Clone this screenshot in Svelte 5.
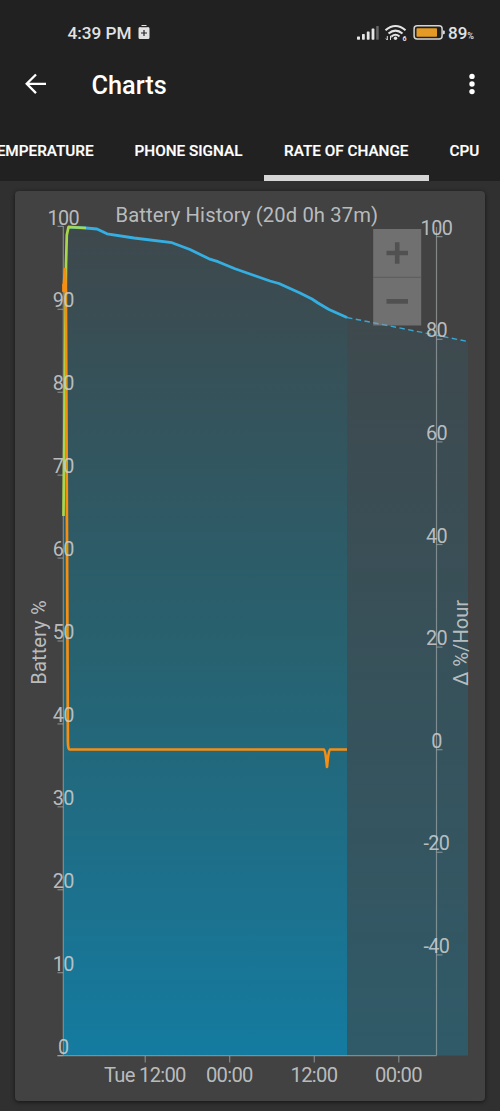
<script>
  const left = Array.from({ length: 11 }, (_, i) => ({ v: 100 - i * 10, y: 226.4 + i * 82.92 }));
  const right = Array.from({ length: 8 }, (_, i) => ({ v: 100 - i * 20, y: 236.7 + i * 102.6 }));
  const times = [
    { t: 'Tue 12:00', x: 145.2, w: 82.5 },
    { t: '00:00', x: 229.7, w: 47.5 },
    { t: '12:00', x: 314.3, w: 47.5 },
    { t: '00:00', x: 398.8, w: 47.5 }
  ];
  const history = 'L86 228 L97 229 L107 233.8 L134 238 L172 242.7 L190 249.5 L209 258.8 L218 261.7 L235 268.8 L255 275.8 L270 281 L279 283.5 L300 293 L312 299 L318 303 L329 309.5 L347 317.5';
</script>

<div class="screen">
  <header>
    <div class="status">
      <span class="clock">4:39 PM</span>
      <svg class="saver" width="12" height="15" viewBox="0 0 12 15">
        <path d="M3.500 0h5v2H10q1.500 0 1.500 1.500v9Q11.500 14 10 14H2Q.5 14 .5 12.500v-9Q.5 2 2 2h1.500z" fill="#e2e2e2" />
        <path d="M2.500 1.700h7M6 5v6M3 8h6" stroke="#252525" stroke-width="1.200" />
      </svg>
      <svg class="indicators" width="90" height="22" viewBox="355 22 90 22">
        <g fill="#e5e5e5">
          <rect x="357" y="36.500" width="3" height="3.200" rx=".6" />
          <rect x="362" y="34" width="2.800" height="5.700" rx=".6" />
          <rect x="366.800" y="31.500" width="2.800" height="8.200" rx=".6" />
          <rect x="371.600" y="28.500" width="2.800" height="11.200" rx=".6" />
          <rect x="376.200" y="26" width="2.500" height="13.700" rx=".6" fill="#666" />
        </g>
        <path d="M385.500 30.200Q395.500 21.800 405.500 30.200M388.500 33.500Q395.500 27.700 402.500 33.500M391.500 36.500Q395.500 33 399.500 36.500" fill="none" stroke="#e5e5e5" stroke-width="2.100" />
        <circle cx="395.500" cy="38.200" r="1.700" fill="#e5e5e5" />
        <path d="M387.300 36v4M385.800 38.500l1.500 1.500M390.500 40v-4l1.600 1.500" fill="none" stroke="#ddd" />
        <text x="402.400" y="40.700" font-size="7" font-weight="700" fill="#e5e5e5">6</text>
        <rect x="414.100" y="25.800" width="28" height="13.200" rx="3" fill="none" stroke="#d5d5d5" stroke-width="1.500" />
        <rect x="416.500" y="28.200" width="20.500" height="8.500" rx=".7" fill="#e49a24" />
        <path d="M443 30.500h.6q1.200 0 1.200 1v1.800q0 1-1.200 1h-.6z" fill="#ddd" />
      </svg>
      <span class="level">89<small>%</small></span>
    </div>
    <div class="toolbar">
      <svg class="back" width="22" height="22" viewBox="0 0 22 22">
        <path d="M21 10.800H2M11 1.500L1.700 10.800L11 20.100" fill="none" stroke="#fff" stroke-width="2.300" />
      </svg>
      <h1>Charts</h1>
      <svg class="more" width="8" height="22" viewBox="0 0 8 22" fill="#fff">
        <circle cx="4" cy="3.400" r="2.700" /><circle cx="4" cy="11" r="2.700" /><circle cx="4" cy="18.600" r="2.700" />
      </svg>
    </div>
    <nav>
      <span class="tab temperature">TEMPERATURE</span>
      <span class="tab signal">PHONE SIGNAL</span>
      <span class="tab active">RATE OF CHANGE</span>
      <span class="tab cpu">CPU</span>
    </nav>
  </header>
  <main>
    <section class="card">
      <svg width="470" height="910" viewBox="15 191 470 910">
        <defs>
          <linearGradient id="past" gradientUnits="userSpaceOnUse" x1="0" y1="227" x2="0" y2="1055">
            <stop offset="0" stop-color="#3e484c" />
            <stop offset=".5" stop-color="#28616f" />
            <stop offset="1" stop-color="#147ba0" />
          </linearGradient>
          <linearGradient id="future" gradientUnits="userSpaceOnUse" x1="0" y1="227" x2="0" y2="1055">
            <stop offset="0" stop-color="#40474a" />
            <stop offset="1" stop-color="#305a68" />
          </linearGradient>
        </defs>
        <path d={`M63.500 1055.500V516L65 240L68 227 ${history}V1055.500Z`} fill="url(#past)" />
        <path d="M347 317.500L468 341.500V1055.500H347Z" fill="url(#future)" />
        <g stroke="#a6acae" stroke-opacity=".65" stroke-width="1.200">
          <path d="M63.300 226V1056M57.500 1055.700H436.500" />
          <path d="M436.500 227V1055.500" />
          {#each left as l}<path d={`M57.500 ${l.y}h5.800`} />{/each}
          {#each right as r}<path d={`M436.500 ${r.y}h6`} />{/each}
          {#each times as t}<path d={`M${t.x} 1056v6.500`} />{/each}
        </g>
        <g fill="none" stroke-linejoin="round">
          <path d={`M68 227 ${history}`} stroke="#35afe2" stroke-width="2.800" />
          <path d="M63.500 516L66 265L66.800 235L68.500 227L86 228" stroke="#a8d74b" stroke-width="2.700" />
          <path d="M347 317.500L468 341.500" stroke="#35a7d5" stroke-width="1.400" stroke-dasharray="5.500 3.400" />
          <path d="M63.500 284V291L64.900 269L65.900 292L67.900 742Q68 749.500 69.500 749.500H324Q325.500 749.500 327 767Q328.500 749.500 330 749.500H347" stroke="#f78e12" stroke-width="2.700" />
        </g>
        <g>
          <rect x="373.200" y="229" width="48" height="96.500" fill="#999" fill-opacity=".53" />
          <path d="M373.200 277.300h48" stroke="#5c5c5c" />
          <path d="M386.500 253h21.500M397.200 242.200v21.500M386.500 301.400h21.500" stroke="#515151" stroke-width="4.600" />
        </g>
        <g class="labels">
          {#each left as l}<text class="value" x="63.300" y={l.y - 1.900}>{l.v}</text>{/each}
          {#each right as r}<text class="value" x="436.400" y={r.y - 2}>{r.v}</text>{/each}
          {#each times as t}<text x={t.x} y="1081.800" textLength={t.w}>{t.t}</text>{/each}
          <text x="246.800" y="221.500" textLength="262.500">Battery History (20d 0h 37m)</text>
          <text transform="translate(46 642.500) rotate(-90)" textLength="84.500">Battery %</text>
          <text transform="translate(468 642.800) rotate(-90)" textLength="86">Δ %/Hour</text>
        </g>
      </svg>
    </section>
  </main>
</div>

<style>
  :global(body) { margin: 0; background: #303030; }
  .screen { width: 500px; height: 1111px; overflow: hidden; background: #303030; color: #fff; font-family: Roboto, sans-serif; }
  header { height: 181px; background: #212121; }
  .status { height: 48px; padding: 21px 24px 0 67.500px; display: flex; align-items: flex-start; box-sizing: border-box; color: #e2e2e2; font-weight: 500; font-size: 17.200px; line-height: 24px; }
  .clock { width: 70px; white-space: nowrap; }
  .saver { margin-top: 4px; }
  .indicators { margin: 1px 3px 0 auto; }
  .level { width: 28px; font-size: 17px; white-space: nowrap; }
  small { font-size: 9px; }
  .toolbar { height: 74px; display: flex; align-items: center; padding: 0 24px 0 25px; }
  h1 { margin: 1px auto 0 44.500px; font-size: 25.300px; font-weight: 500; line-height: 30px; }
  .more { margin-bottom: 3px; }
  .back { margin-bottom: 2px; }
  nav { height: 59px; display: flex; overflow: hidden; }
  .tab { flex: none; box-sizing: border-box; height: 59px; padding-top: 19px; text-align: center; font-size: 15.300px; font-weight: 500; line-height: 20px; white-space: nowrap; -webkit-text-stroke: .2px #fff; }
  .temperature { width: 146px; margin-left: -32.500px; }
  .signal { width: 150px; }
  .active { width: 165.500px; border-bottom: 6px solid #d5d5d5; }
  .cpu { width: 71px; }
  main { padding: 10px 15px; }
  .card { height: 910px; background: #424242; border-radius: 4px; overflow: hidden; box-shadow: 0 1px 4px #0009; }
  .card svg { display: block; }
  svg text { font-family: Roboto, sans-serif; }
  .labels { font-size: 20.200px; fill: #c9cccd; fill-opacity: .9; text-anchor: middle; }
  .value { font-size: 19.800px; letter-spacing: -.6px; }
</style>
